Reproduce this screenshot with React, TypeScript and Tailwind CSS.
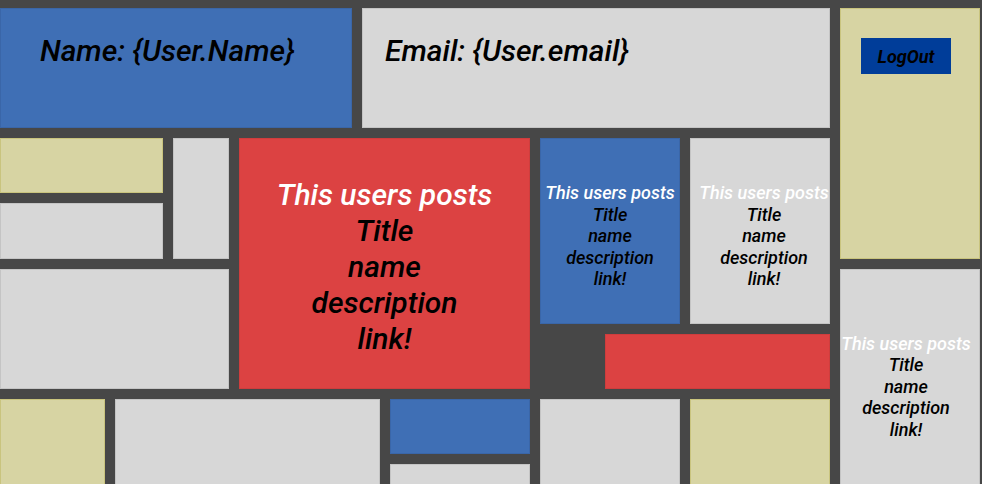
import React from "react";

const font = { fontFamily: "Roboto, 'Liberation Sans', sans-serif" };

function Block({ className }: { className: string }) {
  return <div className={`border ${className}`} />;
}

function PostCard({ className, big = false }: { className: string; big?: boolean }) {
  const size = big ? "text-[30px] leading-[36px] pt-[7px]" : "text-[18px] leading-[21.5px] pt-[10px]";
  return (
    <div className={`border flex flex-col items-center justify-center text-center italic font-medium ${size} ${className}`}>
      <span className="text-white whitespace-nowrap">This users posts</span>
      <span className="text-black">Title</span>
      <span className="text-black">name</span>
      <span className="text-black">description</span>
      <span className="text-black">link!</span>
    </div>
  );
}

export default function App() {
  return (
    <div className="w-full h-[484px] overflow-hidden bg-[#474747] pt-2" style={font}>
      <div className="grid gap-[10px] grid-cols-[105px_48px_56px_113px_18px_140px_55px_75px_140px_140px] grid-rows-[120px_55px_56px_55px_55px_55px_30px]">
        {/* header row */}
        <div className="col-start-1 col-end-5 row-start-1 border border-[#3a66a8] bg-[#3f6fb5] pl-[39px] pt-6">
          <h1 className="text-[30px] leading-[36px] italic font-medium text-black whitespace-nowrap">Name: {"{User.Name}"}</h1>
        </div>
        <div className="col-start-5 col-end-10 row-start-1 border border-[#c4c4c4] bg-[#d7d7d7] pl-[22px] pt-6">
          <h2 className="text-[30px] leading-[36px] italic font-medium text-black whitespace-nowrap">Email: {"{User.email}"}</h2>
        </div>
        <div className="col-start-10 col-end-11 row-start-1 row-end-4 border border-[#c9c47e] bg-[#d7d4a3] pl-5 pt-[29px]">
          <button className="w-[90px] h-[36px] bg-[#003d99] text-black italic font-bold text-[18px]">LogOut</button>
        </div>

        {/* left blocks */}
        <Block className="col-start-1 col-end-3 row-start-2 border-[#c9c47e] bg-[#d7d4a3]" />
        <Block className="col-start-1 col-end-3 row-start-3 border-[#c4c4c4] bg-[#d7d7d7]" />
        <Block className="col-start-3 col-end-4 row-start-2 row-end-4 border-[#c4c4c4] bg-[#d7d7d7]" />
        <Block className="col-start-1 col-end-4 row-start-4 row-end-6 border-[#c4c4c4] bg-[#d7d7d7]" />

        {/* posts */}
        <PostCard big className="col-start-4 col-end-7 row-start-2 row-end-6 border-[#cf3d3d] bg-[#dc4242]" />
        <PostCard className="col-start-7 col-end-9 row-start-2 row-end-5 border-[#3a66a8] bg-[#3f6fb5]" />
        <PostCard className="col-start-9 col-end-10 row-start-2 row-end-5 border-[#c4c4c4] bg-[#d7d7d7] pl-2" />
        <Block className="col-start-8 col-end-10 row-start-5 border-[#cf3d3d] bg-[#dc4242]" />
        <PostCard className="col-start-10 col-end-11 row-start-4 row-end-8 border-[#c4c4c4] bg-[#d7d7d7] pr-2" />

        {/* bottom row */}
        <Block className="col-start-1 col-end-2 row-start-6 row-end-8 border-[#c9c47e] bg-[#d7d4a3]" />
        <Block className="col-start-2 col-end-6 row-start-6 row-end-8 border-[#c4c4c4] bg-[#d7d7d7]" />
        <Block className="col-start-6 col-end-7 row-start-6 border-[#3a66a8] bg-[#3f6fb5]" />
        <Block className="col-start-6 col-end-7 row-start-7 border-[#c4c4c4] bg-[#d7d7d7]" />
        <Block className="col-start-7 col-end-9 row-start-6 row-end-8 border-[#c4c4c4] bg-[#d7d7d7]" />
        <Block className="col-start-9 col-end-10 row-start-6 row-end-8 border-[#c9c47e] bg-[#d7d4a3]" />
      </div>
    </div>
  );
}
